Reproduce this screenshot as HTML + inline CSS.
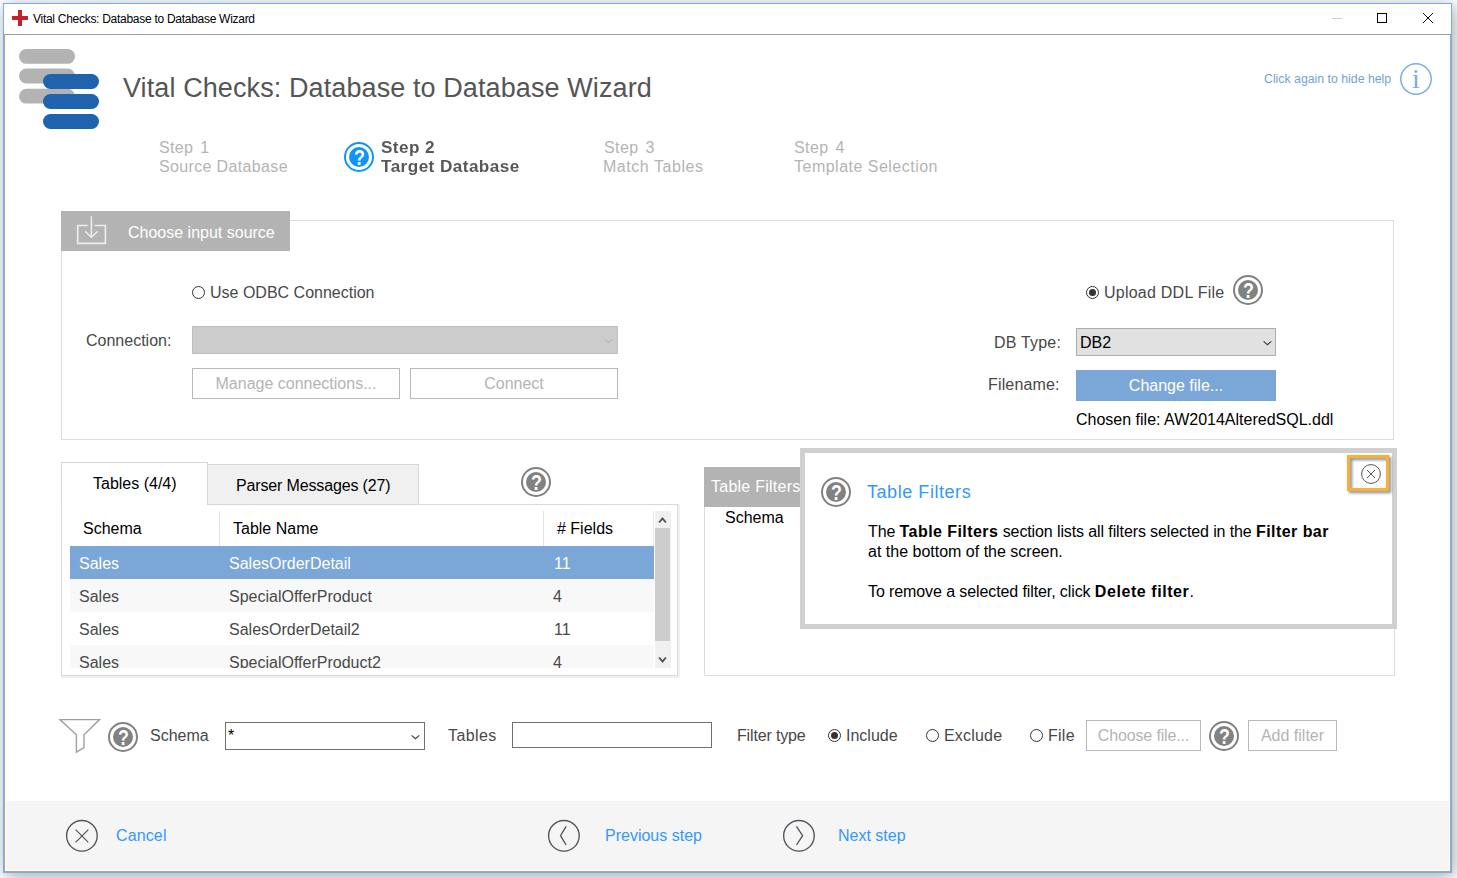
<!DOCTYPE html>
<html lang="en">
<head>
<meta charset="utf-8">
<title>Vital Checks: Database to Database Wizard</title>
<style>
html,body{margin:0;padding:0}
body{width:1457px;height:878px;overflow:hidden;background:#fff;position:relative;font-family:"Liberation Sans",sans-serif;font-size:16px;color:#484848}
.a{position:absolute}
.t{position:absolute;white-space:pre;line-height:20px;font-size:16px}
svg{position:absolute;overflow:visible}
#win{position:absolute;left:3px;top:3px;width:1447px;height:868px;border:1px solid #6db2ee;background:#fff;box-shadow:2px 2.5px 16px rgba(0,0,0,.36)}
#client{position:absolute;left:4px;top:34px;width:1445px;height:836px;border:1px solid #a6a6a6;border-top-color:#9d9d9d;background:#fff}
#footer{position:absolute;left:6px;top:801px;width:1443px;height:69px;background:#f5f5f5}
.hdr{background:#b3b3b3;color:#fff}
.lg{color:#b4b4b4}
.blue{color:#3498fc}
.blk{color:#000}
.t b{letter-spacing:0.44px}
.btn{position:absolute;box-sizing:border-box;border:1px solid #b9b9b9;background:#fff;color:#b4b4b4;text-align:center;font-size:16px}
.radio{position:absolute;box-sizing:border-box;width:13px;height:13px;border:1px solid #333;border-radius:50%;background:#fff}
.radio.on::after{content:"";position:absolute;left:2px;top:2px;width:7px;height:7px;border-radius:50%;background:#333}
.row{position:absolute;left:70px;width:584px;height:33px}
</style>
</head>
<body>
<div id="win"></div>
<div id="client"></div>
<div id="footer"></div>

<!-- title bar -->
<div class="a" style="left:18px;top:10px;width:4px;height:16px;background:#cb1f27"></div>
<div class="a" style="left:12px;top:16px;width:16px;height:4px;background:#cb1f27"></div>
<div class="t blk" id="wtitle" style="left:33px;top:9px;font-size:12px;letter-spacing:-0.28px">Vital Checks: Database to Database Wizard</div>
<div class="a" style="left:1332px;top:18px;width:10px;height:1px;background:#cfcfcf"></div>
<div class="a" style="left:1377px;top:13px;width:8px;height:8px;border:1px solid #000"></div>
<svg style="left:1423px;top:13px" width="10" height="10" viewBox="0 0 10 10"><path d="M0 0L10 10M10 0L0 10" stroke="#000" stroke-width="0.95" fill="none"/></svg>

<!-- logo -->
<svg style="left:19px;top:49px" width="56" height="56" viewBox="0 0 56 56"><rect x="0" y="0" width="56" height="14.8" rx="7.4" fill="#b2b3b2"/><rect x="0" y="19.6" width="56" height="14.8" rx="7.4" fill="#b2b3b2"/><rect x="0" y="39.8" width="56" height="14.8" rx="7.4" fill="#b2b3b2"/></svg>
<div class="a" style="left:43px;top:74px;width:56px;height:15px;border-radius:8px;background:#1f62ae"></div>
<div class="a" style="left:43px;top:94px;width:56px;height:15px;border-radius:8px;background:#1f62ae"></div>
<div class="a" style="left:43px;top:114px;width:56px;height:15px;border-radius:8px;background:#1f62ae"></div>

<div class="t" id="h1" style="left:123px;top:71px;font-size:27px;line-height:34px;color:#555;letter-spacing:0.1px">Vital Checks: Database to Database Wizard</div>

<div class="t" id="hidehelp" style="left:1264px;top:69px;font-size:12.3px;color:#6fa3dc">Click again to hide help</div>
<svg style="left:1400px;top:63px" width="32" height="32" viewBox="0 0 32 32"><circle cx="16" cy="16" r="15.2" fill="none" stroke="#7baee2" stroke-width="1.5"/><text x="16" y="25" text-anchor="middle" font-family="Liberation Serif, serif" font-size="28" fill="#7baee2">i</text></svg>

<!-- steps -->
<div class="t lg" id="s1a" style="left:159px;top:138px;letter-spacing:0.35px;word-spacing:2.2px">Step 1</div>
<div class="t lg" id="s1b" style="left:159px;top:157px;letter-spacing:0.35px">Source Database</div>
<svg style="left:344px;top:142px" width="30" height="30" viewBox="0 0 30 30"><circle cx="15" cy="15" r="14" fill="none" stroke="#1194f6" stroke-width="2"/><circle cx="15" cy="15" r="10" fill="#1194f6"/><text transform="translate(15.4 23.1) scale(.81 1)" text-anchor="middle" font-family="Liberation Sans, sans-serif" font-size="22" font-weight="bold" fill="#fff">?</text></svg>
<div class="t" id="s2a" style="left:381px;top:138px;font-weight:bold;color:#585858;letter-spacing:0.4px;transform:scaleX(1.07);transform-origin:0 0">Step 2</div>
<div class="t" id="s2b" style="left:381px;top:157px;font-weight:bold;color:#585858;letter-spacing:0.42px;transform:scaleX(1.07);transform-origin:0 0">Target Database</div>
<div class="t lg" id="s3a" style="left:604px;top:138px;letter-spacing:0.4px;word-spacing:2.2px">Step 3</div>
<div class="t lg" id="s3b" style="left:603px;top:157px;letter-spacing:0.54px">Match Tables</div>
<div class="t lg" id="s4a" style="left:794px;top:138px;letter-spacing:0.4px;word-spacing:2.2px">Step 4</div>
<div class="t lg" id="s4b" style="left:794px;top:157px;letter-spacing:0.49px">Template Selection</div>

<!-- choose input source panel -->
<div class="a" style="left:61px;top:220px;width:1333px;height:220px;border:1px solid #dcdcdc;box-sizing:border-box"></div>
<div class="a hdr" style="left:61px;top:211px;width:229px;height:40px"></div>
<svg style="left:77px;top:216px" width="30" height="30" viewBox="0 0 30 30"><path d="M10.75 9.5H0.7V27.4H28.4V9.5H17.8" fill="none" stroke="#ededed" stroke-width="1.7"/><path d="M14.4 0.2V21M8.1 15.3L14.4 21.3L20.7 15.3" fill="none" stroke="#ededed" stroke-width="1.5"/></svg>
<div class="t" id="cis" style="left:128px;top:223px;color:#fff">Choose input source</div>

<div class="radio" style="left:192px;top:286px"></div>
<div class="t" id="odbc" style="left:210px;top:283px">Use ODBC Connection</div>
<div class="t" id="conn" style="left:86px;top:331px">Connection:</div>
<div class="a" style="left:192px;top:326px;width:426px;height:28px;box-sizing:border-box;border:1px solid #bfbfbf;background:#cccccc"></div>
<svg style="left:604.4px;top:338.6px" width="9" height="5" viewBox="0 0 9 5"><path d="M0.6 0.4L4.45 3.7L8.3 0.4" fill="none" stroke="#b7b7b7" stroke-width="1.1"/></svg>
<div class="btn" id="mc" style="left:192px;top:368px;width:208px;height:31px;line-height:29px">Manage connections...</div>
<div class="btn" id="cn" style="left:410px;top:368px;width:208px;height:31px;line-height:29px">Connect</div>

<div class="radio on" style="left:1086px;top:286px"></div>
<div class="t" id="upl" style="left:1104px;top:283px;letter-spacing:0.24px">Upload DDL File</div>
<svg class="help" style="left:1233px;top:275px" width="30" height="30" viewBox="0 0 30 30"><circle cx="15" cy="15" r="14" fill="none" stroke="#828282" stroke-width="2"/><circle cx="15" cy="15" r="10" fill="#828282"/><text transform="translate(15.4 23.1) scale(.81 1)" text-anchor="middle" font-family="Liberation Sans, sans-serif" font-size="22" font-weight="bold" fill="#fff">?</text></svg>
<div class="t" id="dbt" style="left:994px;top:333px;letter-spacing:0.2px">DB Type:</div>
<div class="a" style="left:1076px;top:328px;width:200px;height:28px;box-sizing:border-box;border:1px solid #adadad;background:#e1e1e1"></div>
<div class="t blk" id="db2" style="left:1080px;top:333px">DB2</div>
<svg style="left:1262.55px;top:340.55px" width="9" height="5" viewBox="0 0 9 5"><path d="M0.6 0.4L4.45 3.7L8.3 0.4" fill="none" stroke="#3a3a3a" stroke-width="1.1"/></svg>
<div class="t" id="fn" style="left:988px;top:375px;letter-spacing:0.15px">Filename:</div>
<div class="a" id="chg" style="left:1076px;top:370px;width:200px;height:31px;background:#7ba7d8;color:#fff;text-align:center;line-height:32px">Change file...</div>
<div class="t blk" id="chosen" style="left:1076px;top:410px">Chosen file: AW2014AlteredSQL.ddl</div>

<!-- tabs + table -->
<div class="a" style="left:61px;top:504px;width:617px;height:172px;box-sizing:border-box;border:1px solid #d9d9d9;box-shadow:2px 0 0 #f0f0f0,0 2px 0 #f0f0f0,2px 2px 0 #f0f0f0"></div>
<div class="a" style="left:207px;top:464px;width:212px;height:41px;box-sizing:border-box;border:1px solid #d6d6d6;background:#f0f0f0"></div>
<div class="a" style="left:61px;top:462px;width:147px;height:43px;box-sizing:border-box;border:1px solid #d6d6d6;border-bottom:none;background:#fff"></div>
<div class="t blk" id="tab1" style="left:93px;top:474px">Tables (4/4)</div>
<div class="t blk" id="tab2" style="left:236px;top:476px;letter-spacing:-0.15px">Parser Messages (27)</div>
<svg class="help" style="left:521px;top:467px" width="30" height="30" viewBox="0 0 30 30"><circle cx="15" cy="15" r="14" fill="none" stroke="#828282" stroke-width="2"/><circle cx="15" cy="15" r="10" fill="#828282"/><text transform="translate(15.4 23.1) scale(.81 1)" text-anchor="middle" font-family="Liberation Sans, sans-serif" font-size="22" font-weight="bold" fill="#fff">?</text></svg>

<div class="t blk" id="th1" style="left:83px;top:519px">Schema</div>
<div class="t blk" id="th2" style="left:233px;top:519px">Table Name</div>
<div class="t blk" id="th3" style="left:557px;top:519px"># Fields</div>
<div class="a" style="left:219px;top:511px;width:1px;height:35px;background:#e3e3e3"></div>
<div class="a" style="left:543px;top:511px;width:1px;height:35px;background:#e3e3e3"></div>
<div class="a" style="left:653px;top:511px;width:1px;height:35px;background:#e8e8e8"></div>

<div class="a" style="left:70px;top:546px;width:584px;height:122px;overflow:hidden">
  <div class="row" style="left:0;top:0;background:#7aa6d8"></div>
  <div class="row" style="left:0;top:33px;background:#f8f8f8"></div>
  <div class="row" style="left:0;top:66px;background:#fff"></div>
  <div class="row" style="left:0;top:99px;background:#f8f8f8"></div>
  <div class="t" style="left:9px;top:8px;color:#fff">Sales</div>
  <div class="t" style="left:159px;top:8px;color:#fff">SalesOrderDetail</div>
  <div class="t" style="left:484px;top:8px;color:#fff">11</div>
  <div class="t" style="left:9px;top:41px">Sales</div>
  <div class="t" style="left:159px;top:41px">SpecialOfferProduct</div>
  <div class="t" style="left:483px;top:41px">4</div>
  <div class="t" style="left:9px;top:74px">Sales</div>
  <div class="t" style="left:159px;top:74px">SalesOrderDetail2</div>
  <div class="t" style="left:484px;top:74px">11</div>
  <div class="t" style="left:9px;top:107px">Sales</div>
  <div class="t" style="left:159px;top:107px">SpecialOfferProduct2</div>
  <div class="t" style="left:483px;top:107px">4</div>
</div>
<!-- scrollbar -->
<div class="a" style="left:655px;top:511px;width:16px;height:157px;background:#f0f0f0"></div>
<div class="a" style="left:655px;top:528px;width:15px;height:113px;background:#cdcdcd"></div>
<svg style="left:658px;top:516px" width="9" height="8" viewBox="0 0 9 8"><path d="M1.1 6.5L4.5 2.5L7.9 6.5" fill="none" stroke="#505050" stroke-width="1.9"/></svg>
<svg style="left:658px;top:656px" width="9" height="8" viewBox="0 0 9 8"><path d="M1.1 1.5L4.5 5.5L7.9 1.5" fill="none" stroke="#505050" stroke-width="1.9"/></svg>

<!-- table filters panel -->
<div class="a" style="left:704px;top:467px;width:691px;height:209px;box-sizing:border-box;border:1px solid #dcdcdc"></div>
<div class="a hdr" style="left:704px;top:467px;width:200px;height:40px"></div>
<div class="t" id="tfh" style="left:711px;top:477px;color:#fff;letter-spacing:0.25px">Table Filters</div>
<div class="t blk" id="tfs" style="left:725px;top:508px">Schema</div>

<!-- help popup -->
<div class="a" style="left:800px;top:448px;width:597px;height:181px;box-sizing:border-box;border:5px solid #d0d0d0;background:#fff"></div>
<svg class="help" style="left:821px;top:477px" width="30" height="30" viewBox="0 0 30 30"><circle cx="15" cy="15" r="14" fill="none" stroke="#828282" stroke-width="2"/><circle cx="15" cy="15" r="10" fill="#828282"/><text transform="translate(15.4 23.1) scale(.81 1)" text-anchor="middle" font-family="Liberation Sans, sans-serif" font-size="22" font-weight="bold" fill="#fff">?</text></svg>
<div class="t blue" id="ph" style="left:867px;top:481px;font-size:18px;line-height:22px;letter-spacing:0.55px">Table Filters</div>
<div class="t blk" id="p1" style="left:868px;top:522px;letter-spacing:-0.11px">The <b>Table Filters</b> section lists all filters selected in the <b>Filter bar</b></div>
<div class="t blk" id="p2" style="left:868px;top:542px">at the bottom of the screen.</div>
<div class="t blk" id="p3" style="left:868px;top:582px;letter-spacing:-0.1px">To remove a selected filter, click <b style="letter-spacing:0.57px">Delete filter</b>.</div>
<div class="a" style="left:1347px;top:455px;width:42px;height:36px;box-sizing:border-box;border:3px solid #fcb02e;filter:drop-shadow(2px 2px 1.8px rgba(45,55,75,.62))"></div>
<svg style="left:1361px;top:464px" width="20" height="20" viewBox="0 0 20 20"><circle cx="10" cy="10" r="9.4" fill="none" stroke="#555" stroke-width="1"/><path d="M6 6L14 14M14 6L6 14" stroke="#555" stroke-width="1" fill="none"/></svg>

<!-- filter bar -->
<svg style="left:59px;top:719px" width="42" height="35" viewBox="0 0 42 35"><path d="M1 0.6H40.5L25 15.8V28.6L17.4 33.2V15.8Z" fill="none" stroke="#a0a0a0" stroke-width="1.4" stroke-linejoin="miter"/></svg>
<svg class="help" style="left:108px;top:722px" width="30" height="30" viewBox="0 0 30 30"><circle cx="15" cy="15" r="14" fill="none" stroke="#828282" stroke-width="2"/><circle cx="15" cy="15" r="10" fill="#828282"/><text transform="translate(15.4 23.1) scale(.81 1)" text-anchor="middle" font-family="Liberation Sans, sans-serif" font-size="22" font-weight="bold" fill="#fff">?</text></svg>
<div class="t" id="fsch" style="left:150px;top:726px">Schema</div>
<div class="a" style="left:225px;top:722px;width:200px;height:28px;box-sizing:border-box;border:1px solid #707070;background:#fff"></div>
<div class="t blk" id="star" style="left:228px;top:726px">*</div>
<svg style="left:411.45px;top:734.55px" width="9" height="5" viewBox="0 0 9 5"><path d="M0.6 0.4L4.45 3.7L8.3 0.4" fill="none" stroke="#3a3a3a" stroke-width="1.1"/></svg>
<div class="t" id="ftab" style="left:448px;top:726px;letter-spacing:0.4px">Tables</div>
<div class="a" style="left:512px;top:722px;width:200px;height:26px;box-sizing:border-box;border:1px solid #707070;background:#fff"></div>
<div class="t" id="ftype" style="left:737px;top:726px;letter-spacing:-0.15px">Filter type</div>
<div class="radio on" style="left:828px;top:729px"></div>
<div class="t" id="inc" style="left:846px;top:726px">Include</div>
<div class="radio" style="left:926px;top:729px"></div>
<div class="t" id="exc" style="left:944px;top:726px;letter-spacing:0.2px">Exclude</div>
<div class="radio" style="left:1030px;top:729px"></div>
<div class="t" id="fil" style="left:1048px;top:726px;letter-spacing:0.25px">File</div>
<div class="btn" id="cf" style="left:1086px;top:720px;width:115px;height:31px;line-height:29px;letter-spacing:-0.15px">Choose file...</div>
<svg class="help" style="left:1209px;top:721px" width="30" height="30" viewBox="0 0 30 30"><circle cx="15" cy="15" r="14" fill="none" stroke="#828282" stroke-width="2"/><circle cx="15" cy="15" r="10" fill="#828282"/><text transform="translate(15.4 23.1) scale(.81 1)" text-anchor="middle" font-family="Liberation Sans, sans-serif" font-size="22" font-weight="bold" fill="#fff">?</text></svg>
<div class="btn" id="af" style="left:1248px;top:720px;width:89px;height:31px;line-height:29px">Add filter</div>

<!-- footer -->
<svg style="left:66px;top:820px" width="32" height="32" viewBox="0 0 32 32"><circle cx="15.9" cy="15.8" r="15.3" fill="none" stroke="#50545a" stroke-width="1.35"/><path d="M9.6 9.6L22.3 22.3M22.3 9.6L9.6 22.3" stroke="#50545a" stroke-width="1.2" fill="none"/></svg>
<div class="t blue" id="cancel" style="left:116px;top:826px;letter-spacing:0.13px">Cancel</div>
<svg style="left:548px;top:820px" width="32" height="32" viewBox="0 0 32 32"><circle cx="15.9" cy="15.8" r="15.3" fill="none" stroke="#50545a" stroke-width="1.35"/><path d="M18.1 6.4L12.5 15.7L18.1 25" stroke="#50545a" stroke-width="1.3" fill="none"/></svg>
<div class="t blue" id="prev" style="left:605px;top:826px">Previous step</div>
<svg style="left:783px;top:820px" width="32" height="32" viewBox="0 0 32 32"><circle cx="15.95" cy="15.8" r="15.3" fill="none" stroke="#50545a" stroke-width="1.35"/><path d="M13.5 6.4L19.6 15.7L13.5 25" stroke="#50545a" stroke-width="1.3" fill="none"/></svg>
<div class="t blue" id="next" style="left:838px;top:826px">Next step</div>
</body>
</html>
